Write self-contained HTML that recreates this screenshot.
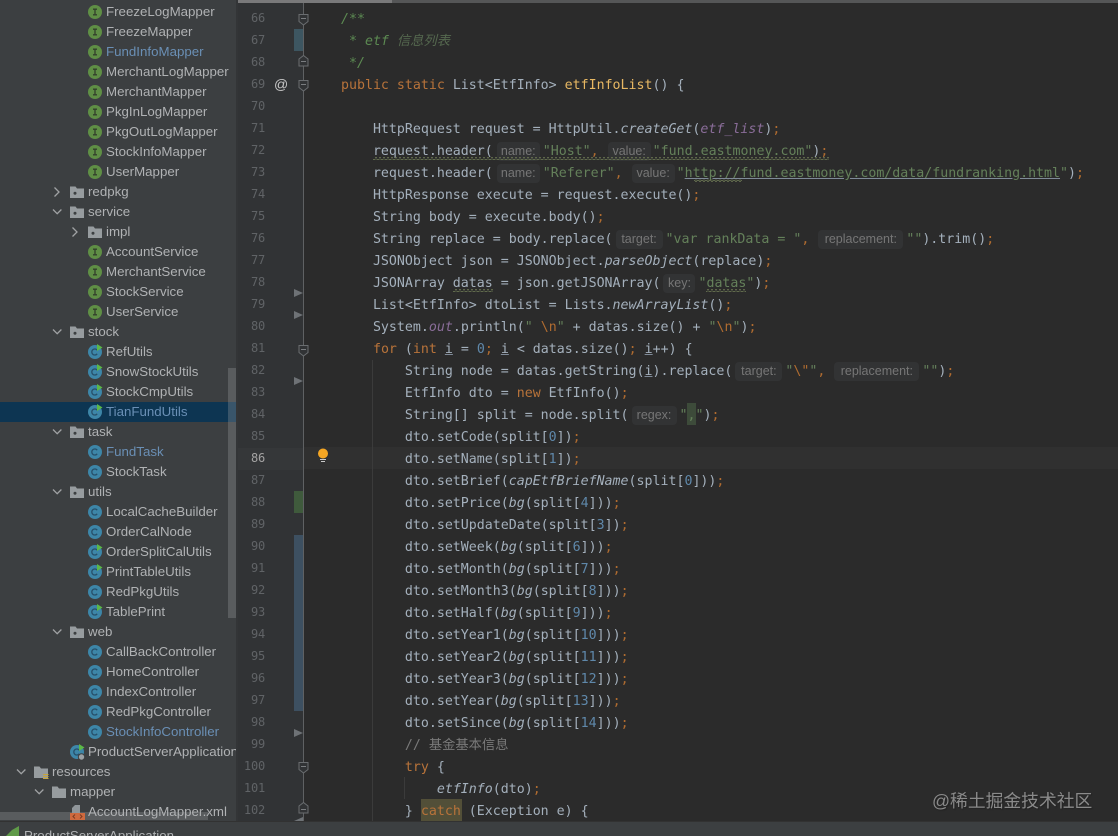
<!DOCTYPE html>
<html><head><meta charset="utf-8"><style>
html,body{margin:0;padding:0;background:#2b2b2b}
#p{position:relative;width:1118px;height:836px;overflow:hidden;background:#2b2b2b}
#side{position:absolute;left:0;top:0;width:238px;height:821px;background:#3c3f41;overflow:hidden;font:13.3px "Liberation Sans","Noto Sans CJK SC",sans-serif;color:#b0b2b4}
.s{position:absolute;height:20px;line-height:20px;white-space:pre;padding-left:18px}
.s svg{position:absolute;left:0;top:3px;width:14px;height:14px;overflow:visible}
.b{color:#6a8fb5}
.a{position:absolute;width:10px;height:10px;overflow:visible}
#gut{position:absolute;left:238px;top:0;width:66px;height:821px;background:#313335}
.n{position:absolute;left:238px;width:27px;text-align:right;height:22px;line-height:22px;font:12px/22px "DejaVu Sans Mono",monospace;color:#606366;letter-spacing:-.2px}
.l{position:absolute;left:341px;margin-top:2px;height:22px;line-height:22px;white-space:pre;font-family:"DejaVu Sans Mono","Noto Sans CJK SC",monospace;font-size:13.28px;color:#a4b0bc}
.k{color:#b8733a}.t{color:#64805a}.u{color:#5f88aa}.m{color:#e8b863}.c{color:#7a7a7a}.g{color:#5c8a52;font-style:italic}.e{font-style:italic}.o{color:#b06c30}.v{color:#8a6d99;font-style:italic}.x{text-decoration:underline;text-decoration-color:#7f8a98}
.h{display:inline-block;position:relative;height:18px;vertical-align:top}
.h span{position:absolute;top:1px;height:19px;line-height:19px;background:#323334;border-radius:4px;font:12.5px/19px "Liberation Sans",sans-serif;color:#767676;text-align:center;white-space:pre}
</style></head><body><div id="p">
<svg width="0" height="0" style="position:absolute"><defs>
<symbol id="I" viewBox="0 0 14 14"><circle cx="7" cy="7" r="7" fill="#5f8f45"/><path d="M5 4.2h4M7 4.2v5.6M5 9.8h4" stroke="#33402c" stroke-width="1.3" fill="none"/></symbol>
<symbol id="C" viewBox="0 0 14 14"><circle cx="7" cy="7" r="7" fill="#3d86a8"/><path d="M9.2 5.2a3 3 0 1 0 0 3.6" stroke="#27506a" stroke-width="1.3" fill="none"/></symbol>
<symbol id="R" viewBox="0 0 14 14" overflow="visible"><circle cx="7" cy="7" r="7" fill="#3d86a8"/><path d="M9.2 5.2a3 3 0 1 0 0 3.6" stroke="#27506a" stroke-width="1.3" fill="none"/><path d="M9 -1L14.5 2.5L9 6z" fill="#5cb848"/></symbol>
<symbol id="F" viewBox="0 0 14 14"><path d="M0 1.500h5.500l1.500 2h7v9.500H0z" fill="#979c9f"/><circle cx="5" cy="8.300" r="1.500" fill="#3c3f41"/></symbol>
<symbol id="D" viewBox="0 0 14 14"><path d="M0 1.500h5.500l1.500 2h7v9.500H0z" fill="#979c9f"/></symbol>
<pattern id="w" width="4" height="3" patternUnits="userSpaceOnUse"><path d="M0 2.500L1 .5L3 .5L4 2.500" fill="none" stroke="#707c55" stroke-width=".7"/></pattern>
</defs></svg>

<div id="side">
<div class="s" style="top:2px;left:88px"><svg><use href="#I"/></svg>FreezeLogMapper</div>
<div class="s" style="top:22px;left:88px"><svg><use href="#I"/></svg>FreezeMapper</div>
<div class="s b" style="top:42px;left:88px"><svg><use href="#I"/></svg>FundInfoMapper</div>
<div class="s" style="top:62px;left:88px"><svg><use href="#I"/></svg>MerchantLogMapper</div>
<div class="s" style="top:82px;left:88px"><svg><use href="#I"/></svg>MerchantMapper</div>
<div class="s" style="top:102px;left:88px"><svg><use href="#I"/></svg>PkgInLogMapper</div>
<div class="s" style="top:122px;left:88px"><svg><use href="#I"/></svg>PkgOutLogMapper</div>
<div class="s" style="top:142px;left:88px"><svg><use href="#I"/></svg>StockInfoMapper</div>
<div class="s" style="top:162px;left:88px"><svg><use href="#I"/></svg>UserMapper</div>
<div class="s" style="top:182px;left:70px"><svg><use href="#F"/></svg>redpkg</div>
<div class="s" style="top:202px;left:70px"><svg><use href="#F"/></svg>service</div>
<div class="s" style="top:222px;left:88px"><svg><use href="#F"/></svg>impl</div>
<div class="s" style="top:242px;left:88px"><svg><use href="#I"/></svg>AccountService</div>
<div class="s" style="top:262px;left:88px"><svg><use href="#I"/></svg>MerchantService</div>
<div class="s" style="top:282px;left:88px"><svg><use href="#I"/></svg>StockService</div>
<div class="s" style="top:302px;left:88px"><svg><use href="#I"/></svg>UserService</div>
<div class="s" style="top:322px;left:70px"><svg><use href="#F"/></svg>stock</div>
<div class="s" style="top:342px;left:88px"><svg><use href="#R"/></svg>RefUtils</div>
<div class="s" style="top:362px;left:88px"><svg><use href="#R"/></svg>SnowStockUtils</div>
<div class="s" style="top:382px;left:88px"><svg><use href="#R"/></svg>StockCmpUtils</div>
<div style="position:absolute;left:0;top:402px;width:237px;height:20px;background:#0d3552"></div>
<div class="s b" style="top:402px;left:88px"><svg><use href="#R"/></svg>TianFundUtils</div>
<div class="s" style="top:422px;left:70px"><svg><use href="#F"/></svg>task</div>
<div class="s b" style="top:442px;left:88px"><svg><use href="#C"/></svg>FundTask</div>
<div class="s" style="top:462px;left:88px"><svg><use href="#C"/></svg>StockTask</div>
<div class="s" style="top:482px;left:70px"><svg><use href="#F"/></svg>utils</div>
<div class="s" style="top:502px;left:88px"><svg><use href="#C"/></svg>LocalCacheBuilder</div>
<div class="s" style="top:522px;left:88px"><svg><use href="#C"/></svg>OrderCalNode</div>
<div class="s" style="top:542px;left:88px"><svg><use href="#R"/></svg>OrderSplitCalUtils</div>
<div class="s" style="top:562px;left:88px"><svg><use href="#R"/></svg>PrintTableUtils</div>
<div class="s" style="top:582px;left:88px"><svg><use href="#C"/></svg>RedPkgUtils</div>
<div class="s" style="top:602px;left:88px"><svg><use href="#R"/></svg>TablePrint</div>
<div class="s" style="top:622px;left:70px"><svg><use href="#F"/></svg>web</div>
<div class="s" style="top:642px;left:88px"><svg><use href="#C"/></svg>CallBackController</div>
<div class="s" style="top:662px;left:88px"><svg><use href="#C"/></svg>HomeController</div>
<div class="s" style="top:682px;left:88px"><svg><use href="#C"/></svg>IndexController</div>
<div class="s" style="top:702px;left:88px"><svg><use href="#C"/></svg>RedPkgController</div>
<div class="s b" style="top:722px;left:88px"><svg><use href="#C"/></svg>StockInfoController</div>
<div class="s" style="top:742px;left:70px"><svg><use href="#R"/><circle cx="11.500" cy="12" r="3.200" fill="#9aa0a4" stroke="#3c3f41"/></svg>ProductServerApplication</div>
<div class="s" style="top:762px;left:34px"><svg><use href="#D"/><path d="M9 9.500h5.500M9 11.500h5.500M9 13.500h5.500" stroke="#c9a63c" stroke-width="1.100"/></svg>resources</div>
<div class="s" style="top:782px;left:52px"><svg><use href="#D"/></svg>mapper</div>
<div style="position:absolute;left:228px;top:368px;width:8px;height:250px;background:rgba(150,152,154,.33)"></div>
<div style="position:absolute;left:0;top:812px;width:208px;height:8px;background:rgba(150,152,154,.33)"></div>
<div class="s" style="top:802px;left:70px"><svg><path d="M5 0h5v8H2V3z" fill="#8f9599"/><rect x="0" y="8" width="15" height="7" fill="#cf6a3f"/><path d="M5 9.500L3 11.500L5 13.500M10 9.500L12 11.500L10 13.500" stroke="#7a3a22" fill="none"/></svg>AccountLogMapper.xml</div>
<svg class="a" style="left:53px;top:187px"><path d="M1.500 0.500L6 5L1.500 9.500" fill="none" stroke="#a0a2a4" stroke-width="1.300"/></svg>
<svg class="a" style="left:53px;top:207px"><path d="M0 2.500L4.200 6.700L8.400 2.500" fill="none" stroke="#a0a2a4" stroke-width="1.300"/></svg>
<svg class="a" style="left:71px;top:227px"><path d="M1.500 0.500L6 5L1.500 9.500" fill="none" stroke="#a0a2a4" stroke-width="1.300"/></svg>
<svg class="a" style="left:53px;top:327px"><path d="M0 2.500L4.200 6.700L8.400 2.500" fill="none" stroke="#a0a2a4" stroke-width="1.300"/></svg>
<svg class="a" style="left:53px;top:427px"><path d="M0 2.500L4.200 6.700L8.400 2.500" fill="none" stroke="#a0a2a4" stroke-width="1.300"/></svg>
<svg class="a" style="left:53px;top:487px"><path d="M0 2.500L4.200 6.700L8.400 2.500" fill="none" stroke="#a0a2a4" stroke-width="1.300"/></svg>
<svg class="a" style="left:53px;top:627px"><path d="M0 2.500L4.200 6.700L8.400 2.500" fill="none" stroke="#a0a2a4" stroke-width="1.300"/></svg>
<svg class="a" style="left:17px;top:767px"><path d="M0 2.500L4.200 6.700L8.400 2.500" fill="none" stroke="#a0a2a4" stroke-width="1.300"/></svg>
<svg class="a" style="left:35px;top:787px"><path d="M0 2.500L4.200 6.700L8.400 2.500" fill="none" stroke="#a0a2a4" stroke-width="1.300"/></svg>
<div style="position:absolute;left:236px;top:0;width:2px;height:821px;background:#333537"></div>
</div>

<div id="gut"></div>
<div style="position:absolute;left:238px;top:448px;width:66px;height:22px;background:#353739"></div>
<div style="position:absolute;left:304px;top:447px;width:814px;height:22px;background:#303030"></div>
<div style="position:absolute;left:238px;top:0;width:880px;height:3px;background:#555657"></div>
<div style="position:absolute;left:238px;top:0;width:154px;height:3px;background:#79797a"></div>

<div class="n" style="top:7px">66</div>
<div class="n" style="top:29px">67</div>
<div class="n" style="top:51px">68</div>
<div class="n" style="top:73px">69</div>
<div class="n" style="top:95px">70</div>
<div class="n" style="top:117px">71</div>
<div class="n" style="top:139px">72</div>
<div class="n" style="top:161px">73</div>
<div class="n" style="top:183px">74</div>
<div class="n" style="top:205px">75</div>
<div class="n" style="top:227px">76</div>
<div class="n" style="top:249px">77</div>
<div class="n" style="top:271px">78</div>
<div class="n" style="top:293px">79</div>
<div class="n" style="top:315px">80</div>
<div class="n" style="top:337px">81</div>
<div class="n" style="top:359px">82</div>
<div class="n" style="top:381px">83</div>
<div class="n" style="top:403px">84</div>
<div class="n" style="top:425px">85</div>
<div class="n" style="top:447px;color:#a4a3a3">86</div>
<div class="n" style="top:469px">87</div>
<div class="n" style="top:491px">88</div>
<div class="n" style="top:513px">89</div>
<div class="n" style="top:535px">90</div>
<div class="n" style="top:557px">91</div>
<div class="n" style="top:579px">92</div>
<div class="n" style="top:601px">93</div>
<div class="n" style="top:623px">94</div>
<div class="n" style="top:645px">95</div>
<div class="n" style="top:667px">96</div>
<div class="n" style="top:689px">97</div>
<div class="n" style="top:711px">98</div>
<div class="n" style="top:733px">99</div>
<div class="n" style="top:755px">100</div>
<div class="n" style="top:777px">101</div>
<div class="n" style="top:799px">102</div>
<div style="position:absolute;left:274px;top:73px;height:22px;line-height:22px;font:14px/22px 'Liberation Sans',sans-serif;color:#c8c8c8">@</div>

<div style="position:absolute;left:294px;top:29px;width:10px;height:22px;background:#3d5661"></div>
<div style="position:absolute;left:294px;top:491px;width:10px;height:22px;background:#3f5a3c"></div>
<div style="position:absolute;left:294px;top:535px;width:10px;height:176px;background:#3d5061"></div>

<svg style="position:absolute;left:0;top:0" width="1118" height="836">
<path d="M303.500 3V821" stroke="#5f6163" fill="none"/>
<g fill="#313335" stroke="#6a6d70">
<path d="M299 14.500h9v7l-4.500 3.500l-4.500-3.500z"/>
<path d="M299 66h9v-7l-4.500-3.500l-4.500 3.500z"/>
<path d="M299 80.500h9v7l-4.500 3.500l-4.500-3.500z"/>
<path d="M299 345.500h9v7l-4.500 3.500l-4.500-3.500z"/>
<path d="M299 762.500h9v7l-4.500 3.500l-4.500-3.500z"/>
<path d="M299 813h9v-7l-4.500-3.500l-4.500 3.500z"/>
</g>
<path d="M301 18.500h5M301 61.500h5M301 84.500h5M301 349.500h5M301 766.500h5M301 809.500h5" stroke="#7a7d80"/>
<g fill="#6e7276">
<path d="M294 289L303 293L294 297z"/>
<path d="M294 311L303 315L294 319z"/>
<path d="M294 377L303 381L294 385z"/>
<path d="M294 729L303 733L294 737z"/>
<path d="M294 821L303 817V821z"/>
</g>
<path d="M372.500 360V821M404.500 777V799" stroke="#3b3b3b" fill="none"/>
<circle cx="323" cy="453.500" r="5" fill="#f5a623"/>
<path d="M320 459.500h6M321 461.500h4" stroke="#c8c8c8" stroke-width="1"/>
<rect x="421" y="799" width="41" height="22" fill="#524f38"/>
<rect x="687" y="403" width="9" height="22" fill="#3d4b3a"/>
</svg>

<div class="l" style="top:7px"><span class="g">/**</span></div>
<div class="l" style="top:29px"><span class="g"> * etf </span><span class="g" style="color:#55684f">信息列表</span></div>
<div class="l" style="top:51px"><span class="g"> */</span></div>
<div class="l" style="top:73px"><span class="k">public static</span> List&lt;EtfInfo&gt; <span class="m">etfInfoList</span>() {</div>
<div class="l" style="top:117px">    HttpRequest request = HttpUtil.<span class="e">createGet</span>(<span class="v">etf_list</span>)<span class="o">;</span></div>
<div class="l" style="top:139px">    request.header(<span class="h" style="width:50px"><span style="left:4px;right:3px">name:</span></span><span class="t">"Host"</span><span class="o">,</span><span class="h" style="width:54px"><span style="left:9px;right:2px">value:</span></span><span class="t">"fund.eastmoney.com"</span>)<span class="o">;</span></div>
<div class="l" style="top:161px">    request.header(<span class="h" style="width:50px"><span style="left:4px;right:3px">name:</span></span><span class="t">"Referer"</span><span class="o">,</span><span class="h" style="width:54px"><span style="left:9px;right:2px">value:</span></span><span class="t">"<span class="x">http://fund.eastmoney.com/data/fundranking.html</span>"</span>)<span class="o">;</span></div>
<div class="l" style="top:183px">    HttpResponse execute = request.execute()<span class="o">;</span></div>
<div class="l" style="top:205px">    String body = execute.body()<span class="o">;</span></div>
<div class="l" style="top:227px">    String replace = body.replace(<span class="h" style="width:53px"><span style="left:3px;right:3px">target:</span></span><span class="t">"var rankData = "</span><span class="o">,</span><span class="h" style="width:97px"><span style="left:9px;right:3px">replacement:</span></span><span class="t">""</span>).trim()<span class="o">;</span></div>
<div class="l" style="top:249px">    JSONObject json = JSONObject.<span class="e">parseObject</span>(replace)<span class="o">;</span></div>
<div class="l" style="top:271px">    JSONArray datas = json.getJSONArray(<span class="h" style="width:38px"><span style="left:3px;right:3px">key:</span></span><span class="t">"datas"</span>)<span class="o">;</span></div>
<div class="l" style="top:293px">    List&lt;EtfInfo&gt; dtoList = Lists.<span class="e">newArrayList</span>()<span class="o">;</span></div>
<div class="l" style="top:315px">    System.<span class="v">out</span>.println(<span class="t">" </span><span class="o">\n</span><span class="t">"</span> + datas.size() + <span class="t">"</span><span class="o">\n</span><span class="t">"</span>)<span class="o">;</span></div>
<div class="l" style="top:337px">    <span class="k">for</span> (<span class="k">int</span> <span class="x">i</span> = <span class="u">0</span><span class="o">;</span> <span class="x">i</span> &lt; datas.size()<span class="o">;</span> <span class="x">i</span>++) {</div>
<div class="l" style="top:359px">        String node = datas.getString(<span class="x">i</span>).replace(<span class="h" style="width:53px"><span style="left:3px;right:3px">target:</span></span><span class="t">"</span><span class="o">\"</span><span class="t">"</span><span class="o">,</span><span class="h" style="width:97px"><span style="left:9px;right:3px">replacement:</span></span><span class="t">""</span>)<span class="o">;</span></div>
<div class="l" style="top:381px">        EtfInfo dto = <span class="k">new</span> EtfInfo()<span class="o">;</span></div>
<div class="l" style="top:403px">        String[] split = node.split(<span class="h" style="width:51px"><span style="left:3px;right:3px">regex:</span></span><span class="t">","</span>)<span class="o">;</span></div>
<div class="l" style="top:425px">        dto.setCode(split[<span class="u">0</span>])<span class="o">;</span></div>
<div class="l" style="top:447px">        dto.setName(split[<span class="u">1</span>])<span class="o">;</span></div>
<div class="l" style="top:469px">        dto.setBrief(<span class="e">capEtfBriefName</span>(split[<span class="u">0</span>]))<span class="o">;</span></div>
<div class="l" style="top:491px">        dto.setPrice(<span class="e">bg</span>(split[<span class="u">4</span>]))<span class="o">;</span></div>
<div class="l" style="top:513px">        dto.setUpdateDate(split[<span class="u">3</span>])<span class="o">;</span></div>
<div class="l" style="top:535px">        dto.setWeek(<span class="e">bg</span>(split[<span class="u">6</span>]))<span class="o">;</span></div>
<div class="l" style="top:557px">        dto.setMonth(<span class="e">bg</span>(split[<span class="u">7</span>]))<span class="o">;</span></div>
<div class="l" style="top:579px">        dto.setMonth3(<span class="e">bg</span>(split[<span class="u">8</span>]))<span class="o">;</span></div>
<div class="l" style="top:601px">        dto.setHalf(<span class="e">bg</span>(split[<span class="u">9</span>]))<span class="o">;</span></div>
<div class="l" style="top:623px">        dto.setYear1(<span class="e">bg</span>(split[<span class="u">10</span>]))<span class="o">;</span></div>
<div class="l" style="top:645px">        dto.setYear2(<span class="e">bg</span>(split[<span class="u">11</span>]))<span class="o">;</span></div>
<div class="l" style="top:667px">        dto.setYear3(<span class="e">bg</span>(split[<span class="u">12</span>]))<span class="o">;</span></div>
<div class="l" style="top:689px">        dto.setYear(<span class="e">bg</span>(split[<span class="u">13</span>]))<span class="o">;</span></div>
<div class="l" style="top:711px">        dto.setSince(<span class="e">bg</span>(split[<span class="u">14</span>]))<span class="o">;</span></div>
<div class="l" style="top:733px">        <span class="c">// 基金基本信息</span></div>
<div class="l" style="top:755px">        <span class="k">try</span> {</div>
<div class="l" style="top:777px">            <span class="e">etfInfo</span>(dto)<span class="o">;</span></div>
<div class="l" style="top:799px">        } <span class="k">catch</span> (Exception e) {</div>

<svg style="position:absolute;left:0;top:0" width="1118" height="836">
<rect x="373" y="157" width="456" height="3" fill="url(#w)"/>
<rect x="694" y="179" width="48" height="3" fill="url(#w)"/>
<rect x="453" y="289" width="40" height="3" fill="url(#w)"/>
<rect x="706" y="289" width="40" height="3" fill="url(#w)"/>
</svg>

<div style="position:absolute;left:0;top:821px;width:1118px;height:15px;background:#3c3f41;border-top:1px solid #323232;box-sizing:border-box"></div>
<svg style="position:absolute;left:6px;top:826px" width="14" height="10"><path d="M0 10L6 4L13 0V10z" fill="#5f9a48"/></svg>
<div style="position:absolute;left:24px;top:826px;height:20px;line-height:20px;font:13.3px/20px 'Liberation Sans',sans-serif;color:#b0b2b4;white-space:pre">ProductServerApplication</div>
<div style="position:absolute;left:932px;top:789px;height:24px;line-height:24px;font:17.8px/24px 'Liberation Sans','Noto Sans CJK SC',sans-serif;color:#8a8a8a;text-shadow:1px 1px 1px #222;white-space:pre">@稀土掘金技术社区</div>
</div></body></html>
